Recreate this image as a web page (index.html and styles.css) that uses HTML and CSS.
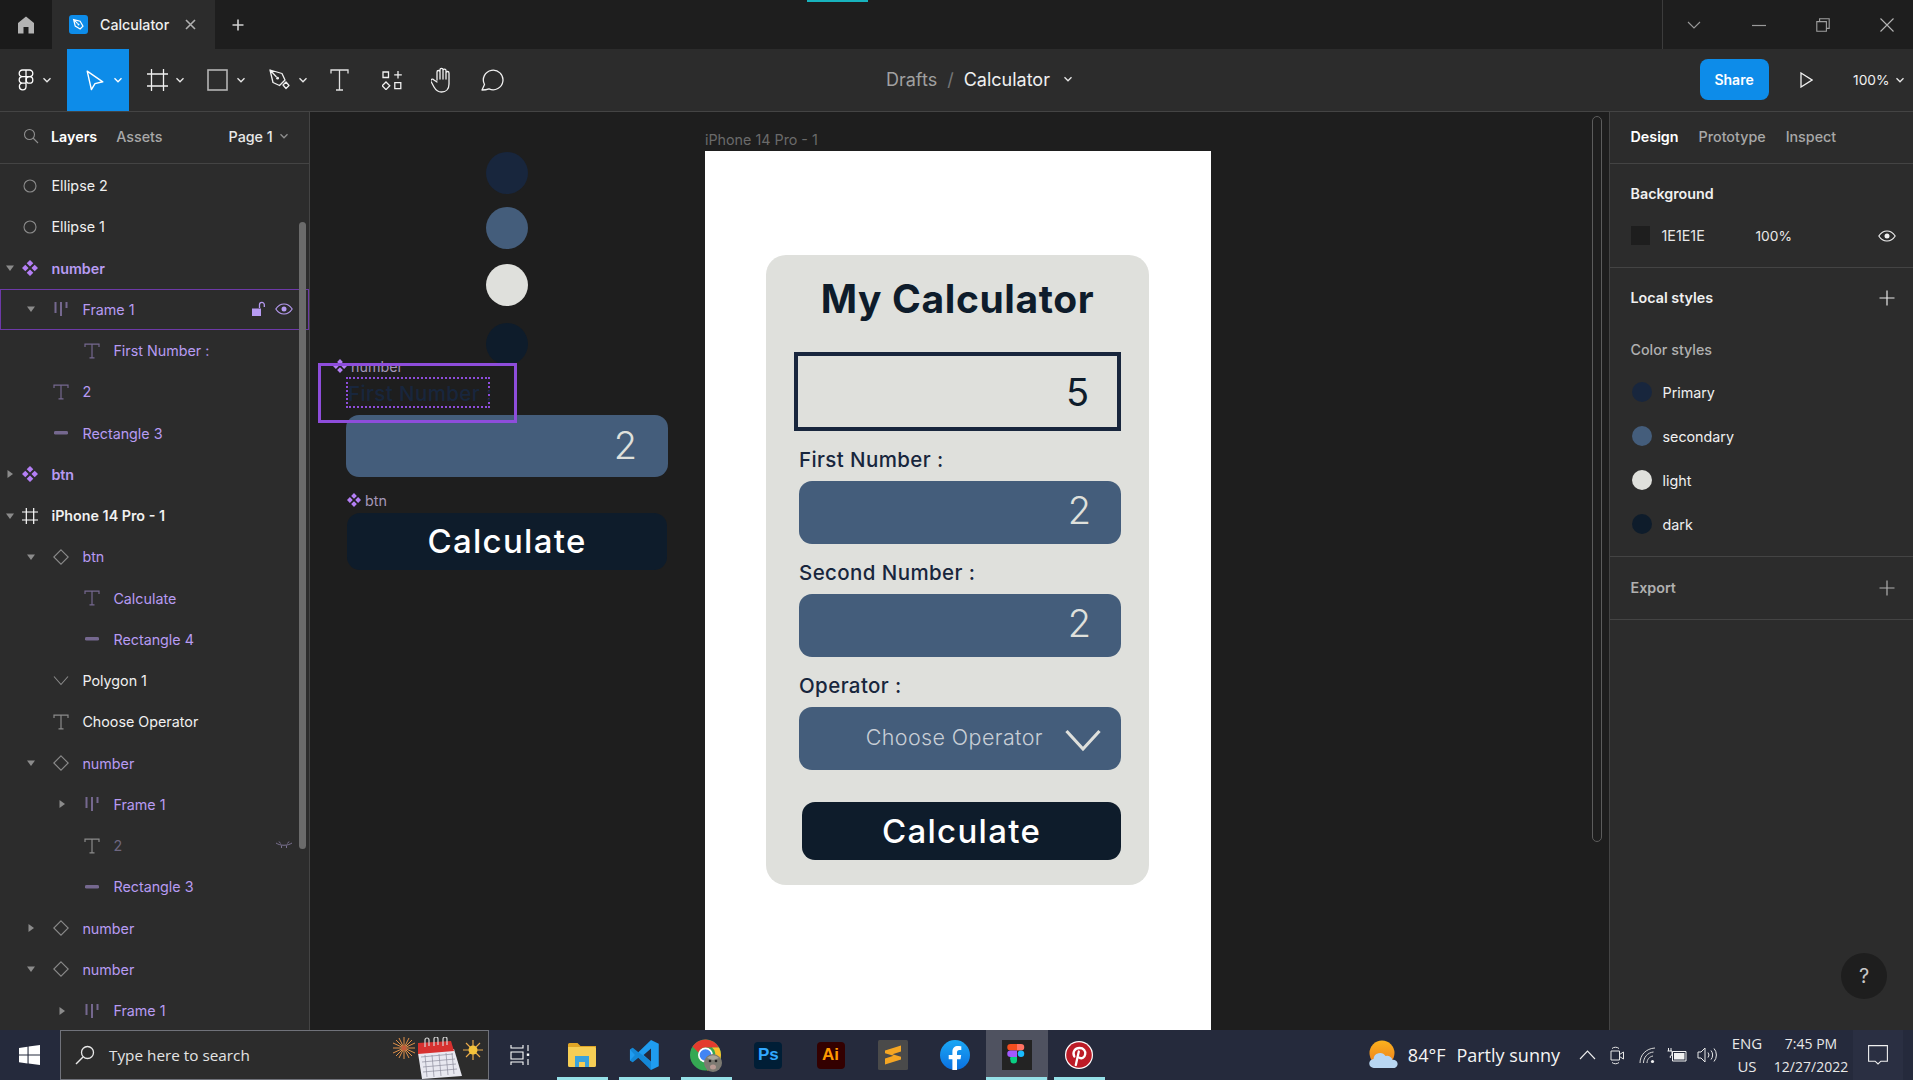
FILE: index.html
```html
<!DOCTYPE html>
<html lang="en">
<head>
<meta charset="utf-8">
<title>Calculator – Figma</title>
<link rel="stylesheet" href="styles.css">
</head>
<body>
<svg class="sprite" aria-hidden="true">
  <symbol id="i-comp" viewBox="0 0 16 16"><path fill="currentColor" d="M8 0l3.300 3.300L8 6.600 4.700 3.300zM3.300 4.700L6.600 8l-3.300 3.300L0 8zM12.700 4.700L16 8l-3.300 3.300L9.400 8zM8 9.400l3.300 3.300L8 16l-3.300-3.300z"/></symbol>
  <symbol id="i-diamond" viewBox="0 0 16 16"><path fill="none" stroke="currentColor" stroke-width="1.1" d="M8 .8L15.2 8 8 15.2.8 8z"/></symbol>
  <symbol id="i-t" viewBox="0 0 16 16"><path fill="none" stroke="currentColor" stroke-width="1.2" d="M1 4V1.200h14V4M8 1.200v13.400M5.500 14.800h5"/></symbol>
  <symbol id="i-bars" viewBox="0 0 16 16"><path fill="none" stroke="currentColor" stroke-width="2" d="M2.500 1v11M8 1v14M13.500 1v6"/></symbol>
  <symbol id="i-rect" viewBox="0 0 16 16"><rect x="1" y="6" width="14" height="3.600" rx="1.400" fill="currentColor"/></symbol>
  <symbol id="i-hash" viewBox="0 0 16 16"><path fill="none" stroke="currentColor" stroke-width="1.2" d="M4.300 0v16M11.700 0v16M0 4h16M0 12h16"/></symbol>
  <symbol id="i-ell" viewBox="0 0 16 16"><circle cx="8" cy="8" r="6" fill="none" stroke="currentColor" stroke-width="1.1"/></symbol>
  <symbol id="i-poly" viewBox="0 0 16 16"><path fill="none" stroke="currentColor" stroke-width="1.1" d="M1 3.500l7 8 7-8"/></symbol>
  <symbol id="i-down" viewBox="0 0 10 10"><path fill="currentColor" d="M1 2.500h8L5 8z"/></symbol>
  <symbol id="i-right" viewBox="0 0 10 10"><path fill="currentColor" d="M2.500 1v8L8 5z"/></symbol>
  <symbol id="i-chev" viewBox="0 0 10 10"><path fill="none" stroke="currentColor" stroke-width="1.3" d="M1.500 3.200L5 6.800l3.500-3.600"/></symbol>
  <symbol id="i-eye" viewBox="0 0 18 12"><path fill="none" stroke="currentColor" stroke-width="1.1" d="M.8 6C3 2.600 5.800 1 9 1s6 1.600 8.200 5C15 9.400 12.200 11 9 11S3 9.400.8 6z"/><circle cx="9" cy="6" r="2.500" fill="currentColor"/></symbol>
  <symbol id="i-plus" viewBox="0 0 16 16"><path fill="none" stroke="currentColor" stroke-width="1.2" d="M8 .5v15M.5 8h15"/></symbol>
</svg>

<div class="app">
  <header class="tabbar">
    <div class="home">
      <svg width="18" height="18" viewBox="0 0 18 18"><path fill="#b3b3b3" d="M9 .5L17 7v10.500h-5.500V11h-5v6.500H1V7z"/></svg>
    </div>
    <div class="tab">
      <span class="tab-logo"><svg width="13" height="13" viewBox="0 0 16 16"><path fill="none" stroke="#fff" stroke-width="1.5" d="M2 2l8 2 3.500 6-3.500 3.500-6-3.500zM2 2l5 5"/><circle cx="8" cy="8" r="1.200" fill="#fff"/></svg></span>
      <span class="tab-name">Calculator</span>
      <svg class="tab-x" width="11" height="11" viewBox="0 0 11 11"><path stroke="#b0b0b0" stroke-width="1.6" d="M1 1l9 9M10 1l-9 9"/></svg>
    </div>
    <svg class="tab-plus" width="12" height="12" viewBox="0 0 12 12"><path stroke="#d0d0d0" stroke-width="1.6" d="M6 .5v11M.5 6h11"/></svg>
    <div class="spacer"><i class="teal"></i></div>
    <div class="winctl">
      <span class="wbtn"><svg width="14" height="14" viewBox="0 0 14 14"><path fill="none" stroke="#9a9a9a" stroke-width="1.1" d="M1 4l6 6 6-6"/></svg></span>
      <span class="wbtn"><svg width="14" height="14" viewBox="0 0 14 14"><path stroke="#9a9a9a" stroke-width="1.2" d="M0 7.500h14"/></svg></span>
      <span class="wbtn"><svg width="14" height="14" viewBox="0 0 14 14"><path fill="none" stroke="#a0a0a0" stroke-width="1.1" d="M.8 3.600h9.600v9.600H.8zM3.600 3.400V.8h9.600v9.600h-2.600"/></svg></span>
      <span class="wbtn"><svg width="14" height="14" viewBox="0 0 14 14"><path stroke="#b5b5b5" stroke-width="1.1" d="M.5.5l13 13M13.500.5l-13 13"/></svg></span>
    </div>
  </header>

  <div class="toolbar">
    <div class="tools">
      <div class="tool t-main">
        <svg width="16" height="22" viewBox="0 0 16 22"><path fill="none" stroke="#fff" stroke-width="1.3" d="M8 1H4.500a3.300 3.300 0 0 0 0 6.600H8zM8 1h3.500a3.300 3.300 0 0 1 0 6.600H8zM8 7.600H4.500a3.300 3.300 0 0 0 0 6.600H8zM8 14.200H4.500A3.300 3.300 0 1 0 8 17.500z"/><circle cx="11.500" cy="10.900" r="3.300" fill="none" stroke="#fff" stroke-width="1.3"/></svg>
        <svg class="chev" width="10" height="10"><use href="#i-chev"/></svg>
      </div>
      <div class="tool t-move">
        <svg width="18" height="21" viewBox="0 0 18 21"><path fill="none" stroke="#fff" stroke-width="1.4" stroke-linejoin="round" d="M1.200 1.200l15.600 10.600-7.800 1.800-3.600 6z"/></svg>
        <svg class="chev" width="10" height="10"><use href="#i-chev"/></svg>
      </div>
      <div class="tool t-frame">
        <svg width="21" height="22" viewBox="0 0 21 22"><path fill="none" stroke="#f0f0f0" stroke-width="1.3" d="M4.500 0v22M16.500 0v22M0 5h21M0 17h21"/></svg>
        <svg class="chev" width="10" height="10"><use href="#i-chev"/></svg>
      </div>
      <div class="tool t-shape">
        <svg width="21" height="22" viewBox="0 0 21 22"><rect x="1" y="1" width="19" height="20" fill="none" stroke="#b5b5b5" stroke-width="1.6"/></svg>
        <svg class="chev" width="10" height="10"><use href="#i-chev"/></svg>
      </div>
      <div class="tool t-pen">
        <svg width="21" height="22" viewBox="0 0 21 22"><path fill="none" stroke="#f0f0f0" stroke-width="1.3" stroke-linejoin="round" d="M1 1l12 3.500 3 6.500-5.500 5.500L4 13.500zM1 1l6.500 7M14 16l3-3 3 3.500-3 3z"/><circle cx="8.600" cy="9.200" r="1.400" fill="#f0f0f0"/></svg>
        <svg class="chev" width="10" height="10"><use href="#i-chev"/></svg>
      </div>
      <div class="tool t-text">
        <svg width="19" height="22" viewBox="0 0 19 22"><path fill="none" stroke="#e0e0e0" stroke-width="1.3" d="M1 4.500V1h17v3.500M9.500 1v20M6 21h7"/></svg>
      </div>
      <div class="tool t-res">
        <svg width="21" height="19" viewBox="0 0 21 19"><path fill="none" stroke="#f0f0f0" stroke-width="1.3" d="M1 1h5.500v5.500H1zM16 0v7.500M12.200 3.800h7.600M4 11l3.800 3.800L4 18.600.2 14.800zM12.800 11.600h6v6h-6z"/></svg>
      </div>
      <div class="tool t-hand">
        <svg width="23" height="26" viewBox="0 0 23 26"><path fill="none" stroke="#f0f0f0" stroke-width="1.3" stroke-linecap="round" stroke-linejoin="round" d="M6 13V5a1.500 1.500 0 0 1 3 0v7V2.800a1.500 1.500 0 0 1 3 0V12 3.600a1.500 1.500 0 0 1 3 0V12 6a1.500 1.500 0 0 1 3 0v11c0 5-3 8-7.500 8-3.500 0-5.500-1.500-7.500-5l-3-5.500c-1-2 1.500-3.200 3-1.500L6 15"/></svg>
      </div>
      <div class="tool t-cmt">
        <svg width="24" height="22" viewBox="0 0 24 22"><path fill="none" stroke="#f0f0f0" stroke-width="1.3" stroke-linejoin="round" d="M1 21l2.500-5.500A9.800 9.800 0 1 1 8 19.800c-2 .8-4.500 1.200-7 1.200z"/></svg>
      </div>
    </div>
    <div class="crumbs">
      <span class="crumb-dim">Drafts</span>
      <span class="crumb-sep">/</span>
      <span class="crumb-cur">Calculator</span>
      <svg width="10" height="10"><use href="#i-chev"/></svg>
    </div>
    <div class="tb-right">
      <span class="share">Share</span>
      <svg class="play" width="13" height="16" viewBox="0 0 13 16"><path fill="none" stroke="#f0f0f0" stroke-width="1.3" d="M1 1l11 7-11 7z"/></svg>
      <span class="zoomval">100%</span>
      <svg width="10" height="10"><use href="#i-chev"/></svg>
    </div>
  </div>

  <main class="main">
    <aside class="layers">
      <div class="l-head">
        <svg class="l-search" width="16" height="16" viewBox="0 0 16 16"><circle cx="6.500" cy="6.500" r="5" fill="none" stroke="#8f8f8f" stroke-width="1.1"/><path stroke="#8f8f8f" stroke-width="1.1" d="M10 10l5 5"/></svg>
        <span class="l-tab on">Layers</span>
        <span class="l-tab">Assets</span>
        <span class="l-page">Page 1</span>
        <svg class="l-pchev" width="10" height="10"><use href="#i-chev"/></svg>
      </div>
      <div class="l-list">
        <div class="row"><span class="car"></span><svg class="ic g" width="16" height="16"><use href="#i-ell"/></svg><span class="nm">Ellipse 2</span></div>
        <div class="row"><span class="car"></span><svg class="ic g" width="16" height="16"><use href="#i-ell"/></svg><span class="nm">Ellipse 1</span></div>
        <div class="row pur b"><span class="car"><svg width="10" height="10"><use href="#i-down"/></svg></span><svg class="ic p" width="16" height="16"><use href="#i-comp"/></svg><span class="nm">number</span></div>
        <div class="row pur sel lv1"><span class="car"><svg width="10" height="10"><use href="#i-down"/></svg></span><svg class="ic pd" width="16" height="16"><use href="#i-bars"/></svg><span class="nm">Frame 1</span>
          <svg class="lock" width="16" height="16" viewBox="0 0 16 16"><path fill="#b79bf2" d="M2 7.500h9V15H2z"/><path fill="none" stroke="#b79bf2" stroke-width="1.3" d="M9.500 7V3.800a2.400 2.400 0 0 1 4.800 0V6"/></svg>
          <svg class="eye" width="18" height="12"><use href="#i-eye"/></svg>
        </div>
        <div class="row pur lv2"><span class="car"></span><svg class="ic pd" width="16" height="16"><use href="#i-t"/></svg><span class="nm">First Number :</span></div>
        <div class="row pur lv1"><span class="car"></span><svg class="ic pd" width="16" height="16"><use href="#i-t"/></svg><span class="nm">2</span></div>
        <div class="row pur lv1"><span class="car"></span><svg class="ic pd" width="16" height="16"><use href="#i-rect"/></svg><span class="nm">Rectangle 3</span></div>
        <div class="row pur b"><span class="car"><svg width="10" height="10"><use href="#i-right"/></svg></span><svg class="ic p" width="16" height="16"><use href="#i-comp"/></svg><span class="nm">btn</span></div>
        <div class="row b"><span class="car"><svg width="10" height="10"><use href="#i-down"/></svg></span><svg class="ic w" width="16" height="16"><use href="#i-hash"/></svg><span class="nm">iPhone 14 Pro - 1</span></div>
        <div class="row pur lv1"><span class="car"><svg width="10" height="10"><use href="#i-down"/></svg></span><svg class="ic g" width="16" height="16"><use href="#i-diamond"/></svg><span class="nm">btn</span></div>
        <div class="row pur lv2"><span class="car"></span><svg class="ic pd" width="16" height="16"><use href="#i-t"/></svg><span class="nm">Calculate</span></div>
        <div class="row pur lv2"><span class="car"></span><svg class="ic pd" width="16" height="16"><use href="#i-rect"/></svg><span class="nm">Rectangle 4</span></div>
        <div class="row lv1"><span class="car"></span><svg class="ic g" width="16" height="16"><use href="#i-poly"/></svg><span class="nm">Polygon 1</span></div>
        <div class="row lv1"><span class="car"></span><svg class="ic g" width="16" height="16"><use href="#i-t"/></svg><span class="nm">Choose Operator</span></div>
        <div class="row pur lv1"><span class="car"><svg width="10" height="10"><use href="#i-down"/></svg></span><svg class="ic g" width="16" height="16"><use href="#i-diamond"/></svg><span class="nm">number</span></div>
        <div class="row pur lv2"><span class="car"><svg width="10" height="10"><use href="#i-right"/></svg></span><svg class="ic pd" width="16" height="16"><use href="#i-bars"/></svg><span class="nm">Frame 1</span></div>
        <div class="row pur lv2 hid"><span class="car"></span><svg class="ic g" width="16" height="16"><use href="#i-t"/></svg><span class="nm">2</span>
          <svg class="shut" width="18" height="10" viewBox="0 0 18 10"><path fill="none" stroke="#7a7190" stroke-width="1" d="M1 3c4.500 3 11.500 3 16 0M4 1.500l1.500 2M14 1.500l-1.500 2M6.500 5.500V8M11.500 5.500V8"/></svg>
        </div>
        <div class="row pur lv2"><span class="car"></span><svg class="ic pd" width="16" height="16"><use href="#i-rect"/></svg><span class="nm">Rectangle 3</span></div>
        <div class="row pur lv1"><span class="car"><svg width="10" height="10"><use href="#i-right"/></svg></span><svg class="ic g" width="16" height="16"><use href="#i-diamond"/></svg><span class="nm">number</span></div>
        <div class="row pur lv1"><span class="car"><svg width="10" height="10"><use href="#i-down"/></svg></span><svg class="ic g" width="16" height="16"><use href="#i-diamond"/></svg><span class="nm">number</span></div>
        <div class="row pur lv2"><span class="car"><svg width="10" height="10"><use href="#i-right"/></svg></span><svg class="ic pd" width="16" height="16"><use href="#i-bars"/></svg><span class="nm">Frame 1</span></div>
      </div>
      <i class="l-scroll"></i>
    </aside>

    <section class="canvas">
      <i class="dot d1"></i><i class="dot d2"></i><i class="dot d3"></i><i class="dot d4"></i>

      <div class="cv-label lb-number"><svg width="14" height="14"><use href="#i-comp"/></svg><span>number</span></div>
      <div class="cv-input"><span class="digit">2</span></div>
      <div class="cv-first">First Number :</div>
      <div class="cv-selection"></div>

      <div class="cv-label lb-btn"><svg width="14" height="14"><use href="#i-comp"/></svg><span>btn</span></div>
      <div class="cv-btn">Calculate</div>

      <div class="ph-label">iPhone 14 Pro - 1</div>
      <div class="phone">
        <div class="card">
          <h1 class="title">My Calculator</h1>
          <div class="display">5</div>
          <div class="field">
            <div class="flabel">First Number :</div>
            <div class="finput"><span class="digit">2</span></div>
          </div>
          <div class="field">
            <div class="flabel">Second Number :</div>
            <div class="finput"><span class="digit">2</span></div>
          </div>
          <div class="field">
            <div class="flabel">Operator :</div>
            <div class="finput fsel"><span class="optext">Choose Operator</span>
              <svg class="opchev" width="36" height="23" viewBox="0 0 36 23"><path fill="none" stroke="#dfe0dc" stroke-width="3.2" d="M1.500 2l16.500 18L34.500 2"/></svg>
            </div>
          </div>
          <div class="calc">Calculate</div>
        </div>
      </div>

      <i class="cv-scroll"></i>
    </section>

    <aside class="props">
      <div class="p-tabs"><span class="on">Design</span><span>Prototype</span><span>Inspect</span></div>
      <div class="p-sec p-bg">
        <div class="p-title">Background</div>
        <div class="p-fill"><i class="swatch"></i><span class="hex">1E1E1E</span><span class="pct">100%</span><svg class="p-eye" width="18" height="12"><use href="#i-eye"/></svg></div>
      </div>
      <div class="p-sec p-styles">
        <div class="p-row"><span class="p-title">Local styles</span><svg width="16" height="16"><use href="#i-plus"/></svg></div>
        <div class="p-sub">Color styles</div>
        <div class="style"><i class="sw c1"></i><span>Primary</span></div>
        <div class="style"><i class="sw c2"></i><span>secondary</span></div>
        <div class="style"><i class="sw c3"></i><span>light</span></div>
        <div class="style"><i class="sw c4"></i><span>dark</span></div>
      </div>
      <div class="p-sec p-export">
        <div class="p-row"><span class="p-title dim">Export</span><svg class="dimic" width="16" height="16"><use href="#i-plus"/></svg></div>
      </div>
      <div class="help">?</div>
    </aside>
  </main>

  <footer class="taskbar">
    <div class="start">
      <svg width="21" height="20" viewBox="0 0 21 20"><path fill="#fff" d="M0 2.900l8.500-1.200v7.900H0zM9.600 1.500L21 0v9.600H9.600zM0 10.600h8.500v7.800L0 17.200zM9.600 10.600H21V20L9.600 18.500z"/></svg>
    </div>
    <div class="search">
      <svg width="20" height="20" viewBox="0 0 20 20"><circle cx="12.500" cy="7.500" r="6" fill="none" stroke="#e8e8e8" stroke-width="1.3"/><path stroke="#e8e8e8" stroke-width="1.5" d="M8 12l-7 7"/></svg>
      <span class="s-text">Type here to search</span>
      <svg class="doodle" width="92" height="42" viewBox="0 0 92 42">
        <g stroke="#e0914a" stroke-width="1"><path d="M12 0v22M1 11h22M4 3l16 16M20 3L4 19M7 1l10 20M17 1L7 21M1 6l22 10M23 6L1 16"/></g>
        <circle cx="12" cy="11" r="2.500" fill="#c25a3a"/>
        <path fill="#e8e8f0" d="M26 16l36-4 8 27-40 3z"/>
        <path fill="#d7312f" d="M26 6l33-2 3 10-36 3z"/>
        <path fill="none" stroke="#8d8d9c" stroke-width=".7" d="M29 20l32-3M30 25l33-3M31 30l33-3M31 35l34-3M33 18l2 22M40 18l2 22M47 17l2 22M54 16l2 22M60 16l2 21"/>
        <path fill="none" stroke="#d8d8d8" stroke-width="1.2" d="M33 10V3a2 2 0 0 1 4 0v6M42 9V2a2 2 0 0 1 4 0v6M51 9V2a2 2 0 0 1 4 0v6"/>
        <g stroke="#e8a94a" stroke-width="1.2"><path d="M81 3v20M71 13h20M74 6l14 14M88 6L74 20"/></g>
        <circle cx="81" cy="13" r="4.500" fill="#f5c33b"/>
      </svg>
    </div>
    <div class="apps">
      <div class="app-slot"><svg width="20" height="20" viewBox="0 0 20 20"><path fill="none" stroke="#fff" stroke-width="1.1" d="M1 0v3h12V0M1 7h12v7H1zM1 20v-3h12v3M18 0v6M18 14v6"/><rect x="16.800" y="8.500" width="2.400" height="2.400" fill="#fff"/></svg></div>
      <div class="app-slot run"><svg width="28" height="24" viewBox="0 0 28 24"><path fill="#e0a526" d="M0 1.500A1.500 1.500 0 0 1 1.500 0h8l3 3H28v3H0z"/><path fill="#f6ce55" d="M0 4h26.500A1.500 1.500 0 0 1 28 5.500v17a1.500 1.500 0 0 1-1.500 1.500h-25A1.500 1.500 0 0 1 0 22.500z"/><path fill="#3aa3dc" d="M7 13h14v11h-4v-5h-6v5H7z"/></svg></div>
      <div class="app-slot run"><svg width="31" height="32" viewBox="0 0 100 100"><path fill="#1f9cf0" fill-rule="evenodd" d="M71 2l25 12v72L71 98 30 59 12 73 3 68V32l9-5 18 14zM71 29L47 50l24 21z"/><path fill="#0065a9" d="M3 32l9-5 59 44v27L30 59 12 73 3 68l16-18z" opacity=".35"/></svg></div>
      <div class="app-slot run">
        <svg width="33" height="33" viewBox="0 0 33 33">
          <circle cx="15.500" cy="16" r="15.500" fill="#35a853"/>
          <path fill="#e33b2e" d="M2.500 7.500A15.500 15.500 0 0 1 29 8.500H16a8 8 0 0 0-7.500 5z"/>
          <path fill="#fbc02d" d="M29 8.500a15.500 15.500 0 0 1-12 23l6-11a8 8 0 0 0-1-12z"/>
          <circle cx="15.500" cy="16" r="7.500" fill="#fff"/><circle cx="15.500" cy="16" r="5.800" fill="#4285f4"/>
          <circle cx="23" cy="24" r="9" fill="#7c7a72"/><circle cx="20" cy="22" r="1.300" fill="#222"/><circle cx="26" cy="22" r="1.300" fill="#222"/><ellipse cx="23" cy="28" rx="3" ry="2.500" fill="#b89a93"/><path fill="#a9a79d" d="M17 19a8 8 0 0 1 12 0l-6 2z"/>
        </svg>
      </div>
      <div class="app-slot"><span class="adobe ps">Ps</span></div>
      <div class="app-slot"><span class="adobe ai">Ai</span></div>
      <div class="app-slot"><svg width="30" height="30" viewBox="0 0 30 30"><rect width="30" height="30" rx="1.500" fill="#4a4a4a"/><path fill="#f5a623" d="M7 10.500L23 5.500v6l-8.500 2.700 8.500 2.600v2.700L7 24.500v-6l8.500-2.700L7 13.200z"/></svg></div>
      <div class="app-slot"><svg width="30" height="30" viewBox="0 0 30 30"><defs><linearGradient id="fb" x1="0" y1="0" x2="0" y2="1"><stop offset="0" stop-color="#1ba8f5"/><stop offset="1" stop-color="#0a6fe0"/></linearGradient></defs><circle cx="15" cy="15" r="15" fill="url(#fb)"/><path fill="#fff" d="M20.500 19.300l.7-4.300H17v-2.800c0-1.200.6-2.300 2.400-2.300h1.900V6.200s-1.700-.3-3.300-.3c-3.400 0-5.600 2-5.600 5.800V15H8.700v4.300h3.700V30h4.600V19.300z"/></svg></div>
      <div class="app-slot active run"><svg width="30" height="30" viewBox="0 0 30 30"><rect width="30" height="30" fill="#232323"/><path fill="#f24e1e" d="M8.500 4H15v6.500H8.500a3.250 3.250 0 0 1 0-6.500z"/><path fill="#ff7262" d="M15 4h4a3.250 3.250 0 0 1 0 6.500h-4z"/><path fill="#a259ff" d="M8.500 10.500H15V17H8.500a3.250 3.250 0 0 1 0-6.500z"/><circle cx="19" cy="13.750" r="3.250" fill="#1abcfe"/><path fill="#0acf83" d="M8.500 17H15v3.250a3.250 3.250 0 1 1-6.500 0 3.250 3.250 0 0 1 0-3.250z"/></svg></div>
      <div class="app-slot run"><svg width="28" height="28" viewBox="0 0 28 28"><circle cx="14" cy="14" r="14" fill="#fff"/><circle cx="14" cy="14" r="12.800" fill="#bd1c27"/><path fill="none" stroke="#fff" stroke-width="2.3" stroke-linecap="round" d="M9.300 15.500c-2.300-4.300.6-8.500 5.200-8.500 4.300 0 6.300 3 5.700 6.200-.6 3.300-3.500 5-5.700 3.500M13.800 10.500L10.800 24"/></svg></div>
    </div>
    <div class="tray">
      <svg class="weather" width="30" height="30" viewBox="0 0 30 30"><defs><linearGradient id="sun" x1="0" y1="0" x2="0" y2="1"><stop offset="0" stop-color="#fbb21e"/><stop offset="1" stop-color="#ee7d1c"/></linearGradient></defs><circle cx="13" cy="13" r="12.500" fill="url(#sun)"/><path fill="#b8d6f2" d="M5 28a4.500 4.500 0 0 1-.5-9 6.500 6.500 0 0 1 12-3 5.500 5.500 0 0 1 7 4 4 4 0 0 1 2 8z"/></svg>
      <span class="temp">84°F</span>
      <span class="wtext">Partly sunny</span>
      <div class="ticons">
        <span><svg width="17" height="10" viewBox="0 0 17 10"><path fill="none" stroke="#f0f0f0" stroke-width="1.1" d="M1 9l7.500-8L16 9"/></svg></span>
        <span><svg width="15" height="19" viewBox="0 0 15 19"><path fill="none" stroke="#e8e8e8" stroke-width="1" d="M1 5h8.500v9H1zM9.500 8.500l4-2.500v7l-4-2.500M2 2.500C4 .8 7 .8 9 2.500M2 16.500c2 1.700 5 1.700 7 0"/></svg></span>
        <span><svg width="17" height="17" viewBox="0 0 17 17"><path fill="none" stroke="#d8d8d8" stroke-width="1" d="M1 16C1 8 7 1.500 16 1M4.500 16c0-5.500 4-10.500 10-11M8 16c0-3.500 2.500-6.500 6-7"/><circle cx="13.500" cy="14.500" r="1.600" fill="#f0f0f0"/></svg></span>
        <span><svg width="20" height="14" viewBox="0 0 20 14"><path fill="none" stroke="#f0f0f0" stroke-width="1" d="M5.500 3.500h13.500v9.500H5.500zM1.500 0v3M4 0v3M.5 3h4.500v3a2 2 0 0 1-1.700 2V10"/><rect x="7" y="5" width="10.500" height="6.500" fill="#f0f0f0"/></svg></span>
        <span><svg width="21" height="16" viewBox="0 0 21 16"><path fill="none" stroke="#e8e8e8" stroke-width="1" d="M1 5h3l4-4v14l-4-4H1zM11 5.500a4 4 0 0 1 0 5M14 3.500a7 7 0 0 1 0 9M17 1.500a10 10 0 0 1 0 13"/></svg></span>
      </div>
      <div class="lang"><span>ENG</span><span>US</span></div>
      <div class="clock"><span>7:45 PM</span><span>12/27/2022</span></div>
      <div class="notif"><svg width="20" height="20" viewBox="0 0 20 20"><path fill="none" stroke="#f0f0f0" stroke-width="1.1" d="M.6.6h18.800v15.600h-6.500L10 19l-2.900-2.800H.6z"/></svg></div>
    </div>
  </footer>
</div>
</body>
</html>
```

FILE: styles.css
```css
* { box-sizing: border-box; }
html, body { margin: 0; padding: 0; background: #1e1e1e; }
body { font-family: "Inter", "Liberation Sans", sans-serif; color: #fff; overflow: hidden; }
.sprite { display: none; }
i { display: block; }

.app { width: 1913px; height: 1080px; display: flex; flex-direction: column; overflow: hidden; }

/* title bar */
.tabbar { height: 49px; flex: none; display: flex; align-items: center; background: #1e1e1e; }
.home { width: 52px; height: 100%; display: flex; align-items: center; justify-content: center; background: #1b1b1b; }
.tab { width: 163px; height: 100%; display: flex; align-items: center; background: #2c2c2c; padding-left: 17px; }
.tab-logo { width: 19px; height: 19px; border-radius: 3px; background: #0d8ce9; display: flex; align-items: center; justify-content: center; }
.tab-name { margin-left: 12px; font-size: 14.2px; font-weight: 500; color: #f0f0f0; }
.tab-x { margin-left: 16px; }
.tab-plus { margin-left: 17px; }
.spacer { flex: 1; height: 100%; position: relative; }
.teal { position: absolute; left: 563px; top: 0; width: 61px; height: 2px; background: #18b3bd; }
.winctl { width: 251px; height: 100%; display: flex; border-left: 1px solid #3c3c3c; flex: none; }
.wbtn { width: 64px; height: 100%; display: flex; align-items: center; justify-content: center; flex: none; }
.wbtn:first-child { width: 62px; margin-right: 2px; }

/* toolbar */
.toolbar { height: 63px; flex: none; display: flex; align-items: center; background: #2c2c2c; border-bottom: 1px solid #444; }
.tools { display: flex; align-items: center; height: 62px; flex: none; width: 860px; }
.tool { height: 62px; display: flex; align-items: center; flex: none; }
.chev { color: #e8e8e8; margin-left: 8px; }
.t-main { width: 67px; padding-left: 18px; }
.t-move { width: 62px; padding-left: 19px; background: #0d8ce9; }
.t-move .chev { margin-left: 9px; color: #fff; }
.t-frame { width: 60px; padding-left: 18px; }
.t-frame .chev { margin-left: 7px; }
.t-shape { width: 62px; padding-left: 18px; }
.t-pen { width: 61px; padding-left: 18px; }
.t-text { width: 70px; padding-left: 18px; }
.t-res { width: 49px; }
.t-hand { width: 50px; }
.t-cmt { width: 30px; }
.crumbs { display: flex; align-items: center; font-size: 18px; width: 220px; margin: 0 0 2px 26px; }
.crumb-dim { color: #a0a0a0; }
.crumb-sep { color: #777; margin: 0 10px; }
.crumb-cur { color: #f0f0f0; }
.crumbs svg { color: #e8e8e8; margin-left: 13px; }
.tb-right { margin-left: auto; display: flex; align-items: center; padding-right: 8px; }
.tb-right > svg:last-child { color: #e8e8e8; margin-left: 5.5px; }
.share { width: 69px; height: 41px; margin-bottom: 1px; background: #0d8ce9; border-radius: 8px; display: flex; align-items: center; justify-content: center; font-size: 14px; font-weight: 600; }
.play { margin-left: 31px; }
.zoomval { margin-left: 40.5px; font-size: 13.75px; color: #f0f0f0; }

/* main */
.main { flex: 1; display: flex; min-height: 0; }

/* layers */
.layers { width: 310px; flex: none; background: #2c2c2c; border-right: 1px solid #444; position: relative; overflow: hidden; }
.l-head { height: 52px; display: flex; align-items: center; border-bottom: 1px solid #444; font-size: 14.3px; padding-bottom: 3px; }
.l-search { margin-left: 23px; }
.l-tab { color: #a8a8a8; font-weight: 500; margin-left: 19px; }
.l-tab.on { color: #fff; font-weight: 600; margin-left: 12px; }
.l-page { margin-left: 66px; color: #e8e8e8; font-weight: 500; }
.l-pchev { color: #8f8f8f; margin-left: 6px; }
.l-list { padding-top: 1px; }
.row { height: 41.25px; display: flex; align-items: center; font-size: 14.3px; color: #f0f0f0; position: relative; }
.row.b .nm { font-weight: 600; }
.row.lv1 { padding-left: 31px; }
.row.lv2 { padding-left: 62px; }
.row.lv1 .car, .row.lv2 .car { margin: 0 10px 0 -10px; }
.row.pur .nm { color: #b79bf2; }
.row.hid .nm { color: #6e6780; }
.row.sel { outline: 1px solid #6d39a8; outline-offset: -1px; }
.car { width: 20px; flex: none; display: flex; justify-content: center; color: #8b8b8b; }
.ic { flex: none; margin: 0 13.4px 0 2px; }
.ic.g { color: #8a8a8a; }
.ic.w { color: #fff; }
.ic.p { color: #b47ff5; }
.ic.pd { color: #75688f; }
.lock { position: absolute; left: 250px; top: 12px; }
.eye { position: absolute; left: 275px; top: 14px; color: #b79bf2; }
.shut { position: absolute; left: 275px; top: 15px; }
.l-scroll { position: absolute; left: 299px; top: 110px; width: 7px; height: 627px; border-radius: 4px; background: #6b6b6b; }

/* canvas */
.canvas { flex: 1; position: relative; background: #1e1e1e; overflow: hidden; }
.dot { position: absolute; left: 176px; width: 42px; height: 42px; border-radius: 50%; }
.d1 { top: 40px; background: #18263d; }
.d2 { top: 95px; background: #445d7b; }
.d3 { top: 152px; background: #dfe0dc; }
.d4 { top: 211px; background: #0e1c2b; }

.cv-label { position: absolute; display: flex; align-items: center; gap: 4px; font-size: 14.3px; color: #a497b8; }
.cv-label svg { color: #b47ff5; }
.lb-number { left: 23px; top: 245px; height: 18px; }
.lb-btn { left: 37px; top: 379px; height: 18px; }
.cv-input { position: absolute; left: 36px; top: 303px; width: 322px; height: 62px; background: #445d7b; border-radius: 13px; display: flex; align-items: center; justify-content: flex-end; padding: 0 31px 2px 0; }
.cv-first { position: absolute; left: 36px; top: 265px; width: 144px; height: 31px; border: 2px dotted #8e4ddb; color: #18263d; font-size: 20.5px; font-weight: 500; letter-spacing: .4px; line-height: 29px; white-space: nowrap; }
.cv-selection { position: absolute; left: 8px; top: 251px; width: 199px; height: 60px; border: 3px solid #8e4ddb; }
.cv-btn { position: absolute; left: 37px; top: 401px; width: 320px; height: 57px; background: #0e1c2b; border-radius: 13px; display: flex; align-items: center; justify-content: center; padding-bottom: 2px; font-size: 33px; font-weight: 500; letter-spacing: 1.3px; color: #fff; }
.digit { font-size: 38px; font-weight: 300; color: #dfe0dc; line-height: 1; }

.ph-label { position: absolute; left: 395px; top: 19px; font-size: 14.3px; color: #6a6a6a; }
.phone { position: absolute; left: 395px; top: 39px; width: 506px; height: 900px; background: #fff; padding: 104px 0 0 61px; }
.card { width: 383px; height: 630px; background: #dfe0dc; border-radius: 20px; padding-top: 19px; color: #0e1c2b; display: flex; flex-direction: column; }
.title { margin: 0; height: 50px; line-height: 50px; text-align: center; font-size: 39px; font-weight: 700; letter-spacing: .6px; color: #0e1c2b; }
.display { margin: 28px 0 0 28px; width: 327px; height: 79px; border: 4px solid #18263d; display: flex; align-items: center; justify-content: flex-end; padding: 1px 28px 0 0; font-size: 38px; font-weight: 400; color: #0e1c2b; }
.field { margin-top: 17px; }
.flabel { height: 24px; line-height: 24px; margin-left: 33px; font-size: 20.5px; font-weight: 500; letter-spacing: .4px; color: #18263d; }
.finput { margin: 9px 0 0 33px; width: 322px; height: 63px; background: #445d7b; border-radius: 13px; display: flex; align-items: center; justify-content: flex-end; padding: 0 30px 5px 0; }
.fsel { padding: 0 20px 0 0; gap: 22px; }
.optext { font-size: 21.5px; font-weight: 300; letter-spacing: .4px; color: #c8ced6; padding-bottom: 3px; }
.opchev { margin-top: 4px; }
.calc { margin: 32px 0 0 36px; width: 319px; height: 58px; background: #0e1c2b; border-radius: 13px; display: flex; align-items: center; justify-content: center; font-size: 33px; font-weight: 500; letter-spacing: 1.3px; color: #fff; }

.cv-scroll { position: absolute; left: 1282px; top: 4px; width: 10px; height: 726px; border: 1.5px solid #5c5c5c; border-radius: 5px; }

/* properties */
.props { width: 304px; flex: none; background: #2c2c2c; border-left: 1px solid #444; position: relative; font-size: 14.3px; }
.p-tabs { height: 52px; display: flex; align-items: center; gap: 20px; padding: 0 0 3px 20.5px; border-bottom: 1px solid #444; font-weight: 500; color: #a8a8a8; }
.p-tabs .on { color: #fff; font-weight: 600; }
.p-sec { border-bottom: 1px solid #444; padding-left: 20.5px; }
.p-bg { height: 104px; padding-top: 19px; }
.p-title { font-weight: 600; color: #f0f0f0; line-height: 22px; }
.p-title.dim { color: #b0b0b0; }
.p-fill { display: flex; align-items: center; margin-top: 21px; }
.swatch { width: 19px; height: 19px; background: #1e1e1e; flex: none; }
.hex { margin-left: 12px; width: 94px; color: #e8e8e8; }
.pct { color: #e8e8e8; width: 122px; font-size: 13.75px; }
.p-eye { color: #f0f0f0; }
.p-styles { height: 289px; padding-top: 19px; }
.p-row { display: flex; align-items: center; justify-content: space-between; padding-right: 18px; color: #e8e8e8; }
.p-sub { margin-top: 30px; color: #b0b0b0; font-weight: 500; line-height: 22px; }
.style { height: 44px; display: flex; align-items: center; color: #f0f0f0; }
.style:nth-child(3) { margin-top: 9px; }
.sw { width: 20px; height: 20px; border-radius: 50%; margin: 0 11px 0 1px; flex: none; }
.c1 { background: #18263d; }
.c2 { background: #445d7b; }
.c3 { background: #dfe0dc; }
.c4 { background: #0e1c2b; }
.p-export { height: 63px; padding-top: 20px; }
.dimic { color: #b0b0b0; }
.help { position: absolute; left: 231px; top: 841px; width: 46px; height: 46px; border-radius: 50%; background: #1e1e1e; color: #c8c8c8; font-size: 20px; display: flex; align-items: center; justify-content: center; }

/* taskbar */
.taskbar { height: 50px; flex: none; display: flex; align-items: center; background: #252a3c; font-family: "Open Sans", "Liberation Sans", sans-serif; }
.start { width: 60px; height: 100%; display: flex; align-items: center; justify-content: center; padding-right: 2px; }
.search { width: 429px; height: 100%; background: #2c2c2c; border: 1px solid #70727a; display: flex; align-items: center; padding-left: 14px; position: relative; flex: none; }
.s-text { margin-left: 14px; font-size: 15.3px; color: #e4e4e4; }
.doodle { position: absolute; right: 4px; top: 6px; }
.apps { display: flex; height: 100%; }
.app-slot { width: 62.1px; height: 100%; display: flex; align-items: center; justify-content: center; position: relative; flex: none; }
.app-slot.run::after { content: ""; position: absolute; left: 6px; right: 5px; bottom: 0; height: 3px; background: #95e0e8; }
.app-slot.active { background: #4f5260; }
.app-slot.active::after { left: 0; right: 1px; }
.adobe { width: 28px; height: 27px; border-radius: 4px; display: flex; align-items: center; justify-content: center; font-family: "Liberation Sans", sans-serif; font-size: 17px; font-weight: 700; }
.ps { background: #001e36; color: #31a8ff; }
.ai { background: #330000; color: #ff9a00; }
.tray { margin-left: auto; display: flex; align-items: center; height: 100%; }
.weather { flex: none; }
.temp { margin-left: 9px; font-size: 18px; color: #f4f4f4; }
.wtext { margin-left: 11px; font-size: 18px; color: #f4f4f4; }
.ticons { display: flex; align-items: center; margin-left: 12px; }
.ticons span { width: 30px; display: flex; justify-content: center; }
.lang, .clock { display: flex; flex-direction: column; align-items: center; font-size: 14px; line-height: 23px; color: #e8e8e8; }
.lang { width: 40px; margin-left: 5px; font-size: 15px; }
.clock { width: 84px; margin-left: 2px; }
.notif { width: 50px; height: 100%; margin-right: 10px; background: #2a2f42; display: flex; align-items: center; justify-content: center; }
```
